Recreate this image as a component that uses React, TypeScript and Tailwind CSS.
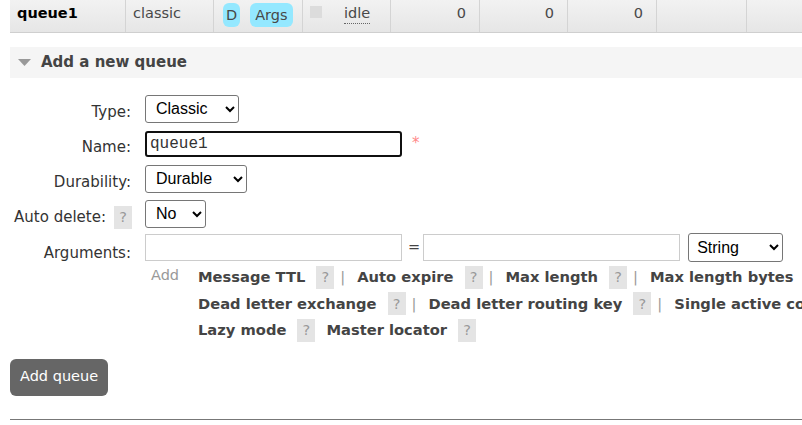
import React from 'react';

const help = 'inline-flex items-center justify-center w-[18px] h-[23px] bg-[#e4e4e4] text-[#999] font-normal';

function Help() {
    return <span className={help}>?</span>;
}

function Sep() {
    return <span className="ml-[6px] mr-[12px] text-[#999] font-normal">|</span>;
}

function ArgLink({ label, sep = true }: { label: string; sep?: boolean }) {
    return (
        <span className="inline-flex items-center">
            <span className="font-bold">{label}</span>
            <span className="ml-[11px] text-[14.5px]"><Help /></span>
            {sep ? <Sep /> : <span className="w-[11px]" />}
        </span>
    );
}

export default function App() {
    return (
        <div className="w-[802px] h-[425px] overflow-hidden bg-white text-[#484848] text-[14.5px] font-['DejaVu_Sans',Verdana,sans-serif]">

            {/* queue table row (scrolled, top cut) */}
            <div className="ml-[10px] flex h-[33px] border-b border-[#cfcfcf] bg-gradient-to-b from-[#f2f2f2] to-[#e6e6e6] leading-none">
                <div className="w-[116px] pl-[7px] pt-[6px] font-bold text-black border-r border-[#d4d4d4]">queue1</div>
                <div className="w-[88px] pl-[7px] pt-[6px] border-r border-[#d4d4d4]">classic</div>
                <div className="w-[89px] flex items-start gap-[10px] pl-[9px] pt-[3px] border-r border-[#d4d4d4]">
                    <span className="bg-[#94e8ff] rounded-[6px] px-[3px] h-[24px] flex items-center">D</span>
                    <span className="bg-[#94e8ff] rounded-[6px] px-[5px] h-[24px] flex items-center">Args</span>
                </div>
                <div className="w-[88px] flex items-start pl-[7px] pt-[6px] border-r border-[#d4d4d4]">
                    <span className="w-[12px] h-[12px] bg-[#dcdcdc]" />
                    <span className="ml-[22px] border-b border-dotted border-[#666] pb-[2px]">idle</span>
                </div>
                <div className="w-[89px] text-right pr-[13px] pt-[6px] border-r border-[#d4d4d4]">0</div>
                <div className="w-[88px] text-right pr-[13px] pt-[6px] border-r border-[#d4d4d4]">0</div>
                <div className="w-[89px] text-right pr-[13px] pt-[6px] border-r border-[#d4d4d4]">0</div>
                <div className="w-[90px] border-r border-[#d4d4d4]" />
                <div className="flex-1" />
            </div>

            {/* section header */}
            <div className="ml-[10px] mt-[14px] h-[31px] bg-[#f5f5f5] flex items-center">
                <svg width="13" height="7" viewBox="0 0 13 7" className="ml-[8px]">
                    <polygon points="0,0 13,0 6.5,7" fill="#999" />
                </svg>
                <span className="ml-[10px] font-bold text-[#444] text-[15px]">Add a new queue</span>
            </div>

            {/* form */}
            <div className="ml-[10px] mt-[13px] flex flex-col">
                <div className="flex items-center h-[35px]">
                    <div className="w-[121px] text-right text-[#333] text-[15px] pt-[8px]">Type:</div>
                    <select defaultValue="classic" className="ml-[14px] w-[94px] h-[28px] border border-[#767676] rounded-[3px] bg-white text-black pl-[6px] text-[16px] font-['Liberation_Sans',Arial,sans-serif]">
                        <option value="classic">Classic</option>
                        <option value="quorum">Quorum</option>
                    </select>
                </div>
                <div className="flex items-center h-[35px]">
                    <div className="w-[121px] text-right text-[#333] text-[15px] pt-[8px]">Name:</div>
                    <input defaultValue="queue1" className="ml-[14px] w-[257px] h-[26px] border-2 border-[#101010] rounded-[3px] px-[3px] text-[16px] text-[#333] font-['Liberation_Mono','Courier_New',monospace] outline-none" />
                    <span className="ml-[10px] text-[#f88] text-[15px]">*</span>
                </div>
                <div className="flex items-center h-[35px]">
                    <div className="w-[121px] text-right text-[#333] text-[15px] pt-[8px]">Durability:</div>
                    <select defaultValue="durable" className="ml-[14px] w-[102px] h-[28px] border border-[#767676] rounded-[3px] bg-white text-black pl-[6px] text-[16px] font-['Liberation_Sans',Arial,sans-serif]">
                        <option value="durable">Durable</option>
                        <option value="transient">Transient</option>
                    </select>
                </div>
                <div className="flex items-center h-[35px]">
                    <div className="w-[122px] flex items-center justify-end gap-[8px] text-[#333] text-[15px] pt-[8px]">
                        <span>Auto delete:</span>
                        <span className="text-[14.5px]"><Help /></span>
                    </div>
                    <select defaultValue="no" className="ml-[13px] w-[61px] h-[28px] border border-[#767676] rounded-[3px] bg-white text-black pl-[6px] text-[16px] font-['Liberation_Sans',Arial,sans-serif]">
                        <option value="no">No</option>
                        <option value="yes">Yes</option>
                    </select>
                </div>
                <div className="flex items-start h-[35px] pt-[2px]">
                    <div className="w-[121px] text-right text-[#333] text-[15px] pt-[9px]">Arguments:</div>
                    <div className="ml-[14px] flex items-center">
                        <input className="w-[257px] h-[27px] border border-[#ccc] bg-white" />
                        <span className="ml-[6px] mr-[3px] text-[#444]">=</span>
                        <input className="w-[257px] h-[27px] border border-[#ccc] bg-white" />
                        <select defaultValue="string" className="ml-[8px] w-[95px] h-[29px] border border-[#767676] rounded-[3px] bg-white text-black pl-[4px] text-[16px] font-['Liberation_Sans',Arial,sans-serif]">
                            <option value="string">String</option>
                            <option value="number">Number</option>
                            <option value="boolean">Boolean</option>
                        </select>
                    </div>
                </div>

                {/* argument shortcuts */}
                <div className="flex mt-[-2px]">
                    <div className="w-[141px] shrink-0" />
                    <div className="w-[47px] shrink-0 text-[#999] pt-[1px]">Add</div>
                    <div className="flex flex-col whitespace-nowrap text-[#444] text-[14.7px] leading-[26.5px]">
                        <div className="flex items-center h-[26.5px]">
                            <ArgLink label="Message TTL" />
                            <ArgLink label="Auto expire" />
                            <ArgLink label="Max length" />
                            <ArgLink label="Max length bytes" />
                        </div>
                        <div className="flex items-center h-[26.5px]">
                            <ArgLink label="Dead letter exchange" />
                            <ArgLink label="Dead letter routing key" />
                            <ArgLink label="Single active consumer" />
                        </div>
                        <div className="flex items-center h-[26.5px]">
                            <ArgLink label="Lazy mode" sep={false} />
                            <ArgLink label="Master locator" sep={false} />
                        </div>
                    </div>
                </div>

                <div className="mt-[15px]">
                    <button className="h-[37px] px-[10px] bg-[#666] text-white rounded-[6px]">Add queue</button>
                </div>
            </div>

            <div className="ml-[10px] mt-[23px] h-px bg-[#777]" />
        </div>
    );
}
